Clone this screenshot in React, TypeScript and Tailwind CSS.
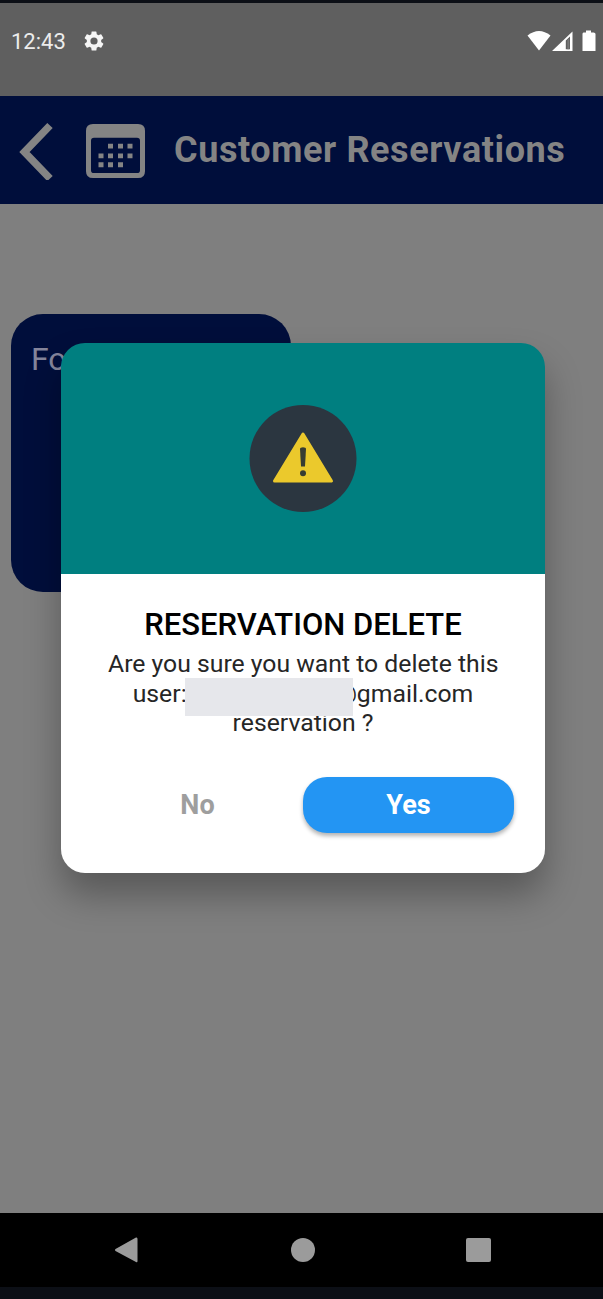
function StatusBar() {
  return (
    <div className="flex h-[93px] shrink-0 items-start justify-between bg-[#5f5f5f] pl-[11px] pr-[7px] pt-[25px]">
      <div className="flex items-center">
        <span className="w-[73px] text-[22px] leading-[28px] text-[#ececec]">12:43</span>
        <svg className="-mt-[2px] -ml-[2px] h-[24px] w-[24px]" viewBox="0 0 24 24" fill="#f5f5f5">
          <path d="M19.14 12.94c.04-.3.06-.61.06-.94 0-.32-.02-.64-.07-.94l2.03-1.58a.49.49 0 0 0 .12-.61l-1.92-3.32a.488.488 0 0 0-.59-.22l-2.39.96c-.5-.38-1.03-.7-1.62-.94l-.36-2.54a.484.484 0 0 0-.48-.41h-3.84c-.24 0-.43.17-.47.41l-.36 2.54c-.59.24-1.13.57-1.62.94l-2.39-.96c-.22-.08-.47 0-.59.22L2.74 8.87c-.12.21-.08.47.12.61l2.03 1.58c-.05.3-.09.63-.09.94s.02.64.07.94l-2.03 1.58a.49.49 0 0 0-.12.61l1.92 3.32c.12.22.37.29.59.22l2.39-.96c.5.38 1.03.7 1.62.94l.36 2.54c.05.24.24.41.48.41h3.84c.24 0 .44-.17.47-.41l.36-2.54c.59-.24 1.13-.56 1.62-.94l2.39.96c.22.08.47 0 .59-.22l1.92-3.32c.12-.22.07-.47-.12-.61zM12 15.6A3.6 3.6 0 1 1 12 8.4a3.6 3.6 0 0 1 0 7.2" />
        </svg>
      </div>
      <svg className="mt-[2px] h-[22px] w-[70px]" viewBox="0 0 70 22" fill="#fff">
        <path d="M1.5 5.5Q13 -3.5 24.5 5.5L13 20.500Z" />
        <path fillRule="evenodd" d="M26 21L46.500 1.500V21ZM39.800 10.500V19.200H44V6.500Z" />
        <path d="M41.300 10L43.200 8V19.200H41.300Z" fill="#777" />
        <path d="M57.500 2.500H60V.5H65V2.500H67.500Q69.500 2.500 69.500 4V21H56.500V4Q56.500 2.500 57.500 2.500Z" />
      </svg>
    </div>
  );
}

function Header() {
  return (
    <header className="flex h-[108px] shrink-0 items-center bg-[#000e3b] pl-[19px] text-[#848484]">
      <svg className="h-[60px] w-[35px]" viewBox="0 0 35 60" fill="none" stroke="currentColor" strokeWidth="7.500">
        <path d="M31 5.500L5.500 32L31 58.500" />
      </svg>
      <svg className="ml-[32px] mt-[2px] h-[54px] w-[59px]" viewBox="0 0 59 55" preserveAspectRatio="none" fill="currentColor">
        <path fillRule="evenodd" d="M7 0H52Q59 0 59 7V48Q59 55 52 55H7Q0 55 0 48V7Q0 0 7 0ZM8 14Q5 14 5 17V47Q5 50 8 50H51Q54 50 54 47V17Q54 14 51 14Z" />
        <path d="M22 20h5v5h-5zM32 20h5v5h-5zM41.500 20h5v5h-5zM12.500 30h5v5h-5zM22 30h5v5h-5zM32 30h5v5h-5zM41.500 30h5v5h-5zM12.500 39h5v5h-5zM22 39h5v5h-5zM32 39h5v5h-5z" />
      </svg>
      <h1 className="ml-[29px] whitespace-nowrap text-[36px] font-bold leading-[44px] tracking-[0.600px]">Customer Reservations</h1>
    </header>
  );
}

function NavigationBar() {
  return (
    <nav className="flex h-[74px] shrink-0 items-center justify-between bg-black pl-[115px] pr-[112px]">
      <svg className="h-[26px] w-[24px]" viewBox="0 0 24 26" fill="#9b9b9b">
        <path d="M21 .5Q22.500 0 22.500 2V24Q22.500 26 21 25L.5 14Q-.5 13 .5 12Z" />
      </svg>
      <div className="h-[24px] w-[24px] rounded-full bg-[#9b9b9b]" />
      <div className="h-[24px] w-[25px] rounded-[2px] bg-[#9b9b9b]" />
    </nav>
  );
}

function DeleteDialog() {
  return (
    <div className="absolute left-[61px] top-[343px] flex h-[530px] w-[484px] flex-col rounded-[24px] shadow-[0_22px_36px_0_rgba(0,0,0,0.3)]">
      <div className="flex h-[231px] shrink-0 items-center justify-center rounded-t-[24px] bg-[#007f80]">
        <svg className="h-[108px] w-[108px]" viewBox="0 0 108 108">
          <circle cx="54" cy="53.500" r="53.500" fill="#2b3640" />
          <path d="M54 29L82.500 76H25.500Z" fill="#ebc92c" stroke="#ebc92c" strokeWidth="3" strokeLinejoin="round" />
          <path d="M51 44Q51 42.300 54 42.300Q57 42.300 57 44L56 61.500H52Z" fill="#373c32" />
          <circle cx="54" cy="68.300" r="3" fill="#373c32" />
        </svg>
      </div>
      <div className="flex grow flex-col rounded-b-[24px] bg-white">
        <div className="flex flex-col items-center pt-[33px] text-center">
          <h2 className="whitespace-nowrap text-[31px] font-medium leading-[36px] text-black">RESERVATION DELETE</h2>
          <div className="relative mt-[6px] w-[390px] whitespace-nowrap text-[24.750px] leading-[29.500px] text-[#262626]">
            <p>Are you sure you want to delete this</p>
            <p className="flex justify-center">
              <span>user:</span>
              <span className="w-[148px]" />
              <span>@gmail.com</span>
            </p>
            <p>reservation ?</p>
            <div className="absolute left-[77px] top-[29px] h-[38px] w-[168px] bg-[#e6e7eb]" />
          </div>
        </div>
        <div className="mt-[39px] flex px-[31px] text-[27px] font-bold">
          <button className="h-[56px] w-[211px] pt-[2px] text-[#9e9e9e]">No</button>
          <button className="h-[56px] w-[211px] rounded-[24px] bg-[#2395f3] pt-[2px] text-white shadow-[0_3px_4px_rgba(0,0,0,0.3)]">Yes</button>
        </div>
      </div>
    </div>
  );
}

export default function App() {
  return (
    <div className="relative flex h-[1299px] w-[603px] flex-col overflow-hidden bg-[#0c0f16] pt-[3px] font-[Roboto,sans-serif]">
      <StatusBar />
      <Header />
      <main className="h-[1009px] shrink-0 bg-[#7f7f7f] pl-[11px] pt-[110px]">
        <div className="h-[278px] w-[280px] rounded-[32px] bg-[#000e3b] pl-[20px] pt-[25px] text-[32px] leading-[40px] text-[#85859b]">
          Fo
        </div>
      </main>
      <NavigationBar />
      <DeleteDialog />
    </div>
  );
}
